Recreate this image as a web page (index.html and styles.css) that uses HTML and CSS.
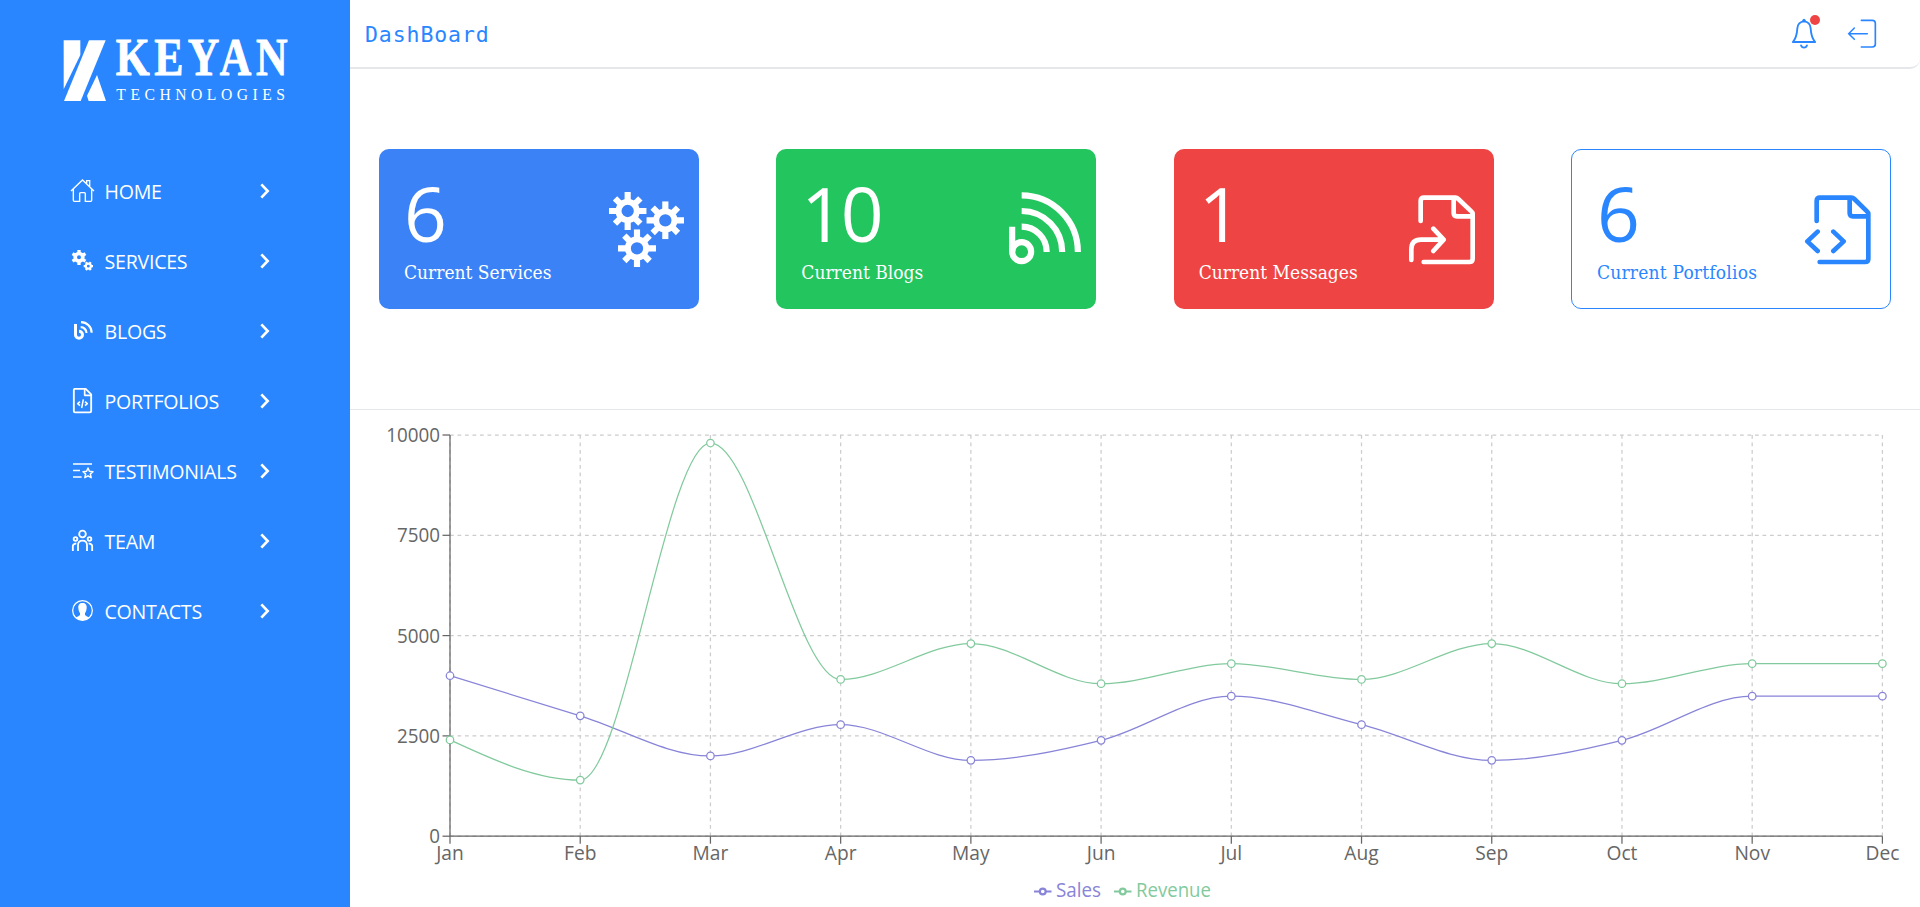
FILE: index.html
```html
<!DOCTYPE html>
<html lang="en">
<head>
<meta charset="utf-8">
<title>DashBoard</title>
<link rel="stylesheet" href="styles.css">
</head>
<body>
<svg class="defs" width="0" height="0">
  <symbol id="chevron" viewBox="0 0 30 48"><path d="M4 4l19 20L4 44" fill="none" stroke="#fff" stroke-width="8"/></symbol>
  <symbol id="gear" viewBox="-57 -57 114 114">
    <circle r="27.5" fill="none" stroke="#fff" stroke-width="18"/>
    <path d="M0-57V-30M0 30V57M-57 0H-30M30 0H57M-38-38L-22-22M22 22L38 38M38-38L22-22M-22 22L-38 38" stroke="#fff" stroke-width="18.5"/>
  </symbol>
</svg>
<div class="app">
  <aside class="sidebar">
    <svg class="logo" viewBox="60 50 720 200" width="240" height="66.7">
      <g fill="#fff">
        <path d="M71 60H121V104L71 207Z"/>
        <path d="M147 60H197L122 242H72Z"/>
        <path d="M171 164L198 242H146L141 226Z"/>
        <text class="logo-name" transform="translate(227 165) scale(.83 1)" textLength="621">KEYAN</text>
        <text class="logo-sub" x="229" y="238" textLength="506">TECHNOLOGIES</text>
      </g>
    </svg>
    <nav class="menu">
      <a class="item">
        <svg class="icon" viewBox="57 54 78 78"><path d="M63 93L97.500 60L132 93M70 88V121Q70 124 73 124H89V101Q89 98 92 98H103Q106 98 106 101V124H122Q125 124 125 121V88M110 70V62H119V79" fill="none" stroke="#fff" stroke-width="4.200"/></svg>
        <span class="label">HOME</span><svg class="chev"><use href="#chevron"/></svg>
      </a>
      <a class="item">
        <svg class="icon" viewBox="57 264 78 78"><g fill="none" stroke="#fff"><circle cx="87" cy="292" r="11.500" stroke-width="11"/><path d="M87 270V280M87 304V315M67.500 281L77 286.500M97 298L106.500 303.500M67.500 303.500L77 298M97 286.500L106.500 281" stroke-width="10"/><circle cx="115" cy="318.500" r="7.500" stroke-width="6.500"/><path d="M108 306.500l3 5M122 306.500l-3 5M108 330.500l3-5M122 330.500l-3-5M101 318.500h6M129 318.500h-6" stroke-width="6.500"/></g></svg>
        <span class="label">SERVICES</span><svg class="chev"><use href="#chevron"/></svg>
      </a>
      <a class="item">
        <svg class="icon" viewBox="57 474 78 78"><g fill="none" stroke="#fff"><path d="M76.500 492V524A10.500 10.500 0 1 0 87 513.500" stroke-width="9"/><path d="M92 501.500A17.500 17.500 0 0 1 109.500 519" stroke-width="6.500"/><path d="M93 486.500A32 32 0 0 1 125 518.500" stroke-width="6.500"/></g></svg>
        <span class="label">BLOGS</span><svg class="chev"><use href="#chevron"/></svg>
      </a>
      <a class="item">
        <svg class="icon" viewBox="57 54 78 78"><g fill="none" stroke="#fff" stroke-linejoin="round"><path d="M75 56.500H107L123.500 73V123Q123.500 127 119.500 127H75Q71.500 127 71.500 123V60Q71.500 56.500 75 56.500Z" stroke-width="5.500"/><path d="M104 57V76H123" stroke-width="5"/><path d="M90 95L83 101L90 107M105 95L112 101L105 107M100 88L95 114" stroke-width="4.500"/></g></svg>
        <span class="label">PORTFOLIOS</span><svg class="chev"><use href="#chevron"/></svg>
      </a>
      <a class="item">
        <svg class="icon" viewBox="57 264 78 78"><g fill="none" stroke="#fff" stroke-width="4.500"><path d="M69 282H126M69 301.500H90M69 321H95"/><path d="M114 294L118.200 304L129 305L121 312L123.500 323L114 317.500L104.500 323L107 312L99 305L109.800 304Z" stroke-linejoin="round"/></g></svg>
        <span class="label">TESTIMONIALS</span><svg class="chev"><use href="#chevron"/></svg>
      </a>
      <a class="item">
        <svg class="icon" viewBox="57 474 78 78"><g fill="none" stroke="#fff" stroke-width="5.500"><circle cx="97.500" cy="492" r="10"/><circle cx="76.500" cy="507" r="5.500"/><circle cx="118.500" cy="507" r="5.500"/><path d="M84 543V526Q84 512 97.500 512Q111 512 111 526V543M68.500 543V529Q68.500 521 79 520M126.500 543V529Q126.500 521 116 520"/></g></svg>
        <span class="label">TEAM</span><svg class="chev"><use href="#chevron"/></svg>
      </a>
      <a class="item">
        <svg class="icon" viewBox="57 684 78 78"><circle cx="97.500" cy="721.500" r="29.500" fill="none" stroke="#fff" stroke-width="3.800"/><path d="M97.500 699C107 699 111 705 110 715Q109 726 105 730V735Q110 740 118 742Q108 751 97.500 751Q87 751 77 742Q85 740 90 735V730Q86 726 85 715C84 705 88 699 97.500 699Z" fill="#fff"/></svg>
        <span class="label">CONTACTS</span><svg class="chev"><use href="#chevron"/></svg>
      </a>
    </nav>
  </aside>

  <main class="main">
    <header class="topbar">
      <h1 class="title">DashBoard</h1>
      <div class="actions">
        <span class="bell">
          <svg viewBox="147 51 90 96" width="30" height="32"><g fill="none" stroke="#2986ff" stroke-width="5.500" stroke-linecap="round" stroke-linejoin="round"><path d="M192 61C178 62 173 71 172 82C171 102 168 112 158.500 123H225.500C216 112 213 102 212 82C211 71 206 62 192 61ZM189 59L192 56L195 59"/><path d="M183 133Q185 140 192 140Q199 140 201 133"/></g></svg>
          <i class="dot"></i>
        </span>
        <svg viewBox="321 51 90 96" width="30" height="32"><g fill="none" stroke="#2986ff" stroke-width="5" stroke-linecap="round"><path d="M364 58H397Q406 58 406 67V129Q406 138 397 138H364"/><path d="M382 98H326M343 81L326 98L343 115" stroke-width="4.500"/></g></svg>
      </div>
    </header>

    <section class="cards">
      <article class="card blue">
        <div class="info"><strong class="count">6</strong><span class="caption">Current Services</span></div>
        <svg class="pict" viewBox="747 185 225 225"><use href="#gear" x="746" y="185" width="114" height="114"/><use href="#gear" x="859" y="213" width="114" height="114"/><use href="#gear" x="774" y="297" width="114" height="114"/></svg>
      </article>
      <article class="card green">
        <div class="info"><strong class="count">10</strong><span class="caption">Current Blogs</span></div>
        <svg class="pict" viewBox="738 185 225 225"><g fill="none" stroke="#fff" stroke-width="18.500"><circle cx="785" cy="364" r="28.500"/><path d="M756.500 289V364M785 289A75 75 0 0 1 860 365M785 242A122 122 0 0 1 906.500 365M785 195A169 169 0 0 1 953.500 365"/></g></svg>
      </article>
      <article class="card red">
        <div class="info"><strong class="count">1</strong><span class="caption">Current Messages</span></div>
        <svg class="pict" viewBox="732 185 225 225"><g fill="none" stroke="#fff" stroke-width="14" stroke-linecap="round" stroke-linejoin="round"><path d="M782 272V212Q782 202 792 202H886Q891 202 895 206L934 243Q938 246 938 252V385Q938 395 928 395H791M881 203V248Q881 258 891 258H936M754 389V357Q754 328 783 328H850M820 295L851 328L820 362"/></g></svg>
      </article>
      <article class="card outline">
        <div class="info"><strong class="count">6</strong><span class="caption">Current Portfolios</span></div>
        <svg class="pict" viewBox="720 185 225 225"><g fill="none" stroke="#2986ff" stroke-width="14" stroke-linecap="round" stroke-linejoin="round"><path d="M770 272V212Q770 202 780 202H874Q879 202 883 206L921 243Q925 246 925 252V385Q925 395 915 395H779M869 203V248Q869 258 879 258H924M773 304L742 333L773 362M820 304L851 333L820 362"/></g></svg>
      </article>
    </section>

    <section class="chart">
      <svg id="plot" width="1570" height="497" viewBox="350 410 1570 497"></svg>
    </section>
  </main>
</div>
<script src="chart.js"></script>
</body>
</html>
```

FILE: styles.css
```css
* { box-sizing: border-box; }
body { margin: 0; font-family: "Open Sans", "Noto Sans", sans-serif; font-size: 20px; background: #fff; overflow: hidden; }
.defs { position: absolute; }
.app { display: flex; width: 1920px; height: 907px; }

.sidebar { width: 350px; background: #2986ff; color: #fff; padding-top: 36.7px; flex: none; }
.logo { display: block; margin-left: 60px; overflow: visible; }
.logo-name { font: bold 158px "Liberation Serif", serif; stroke: #fff; stroke-width: 2.5px; }
.logo-sub { font: 47px "Liberation Serif", serif; }
.menu { margin-top: 52.6px; }
.item { display: flex; align-items: center; height: 70px; padding: 0 80px 0 69px; }
.icon { width: 26px; height: 26px; flex: none; }
.label { flex: 1; margin-left: 9.5px; font-size: 19.6px; letter-spacing: -0.25px; line-height: 30px; padding-top: 3px; white-space: nowrap; }
.chev { width: 10px; height: 16px; flex: none; }

.main { flex: 1; display: flex; flex-direction: column; }
.topbar { display: flex; align-items: center; justify-content: space-between; height: 69px; padding: 0 43px 0 15px; border-bottom: 2px solid #e5e7eb; border-bottom-right-radius: 10px; }
.title { margin: 0; padding-top: 2px; font: 21.5px "DejaVu Sans Mono", monospace; letter-spacing: 0.9px; color: #2986ff; }
.actions { display: flex; gap: 28px; }
.actions svg { display: block; }
.bell { position: relative; }
.dot { position: absolute; top: -3px; left: 21px; width: 10px; height: 10px; border-radius: 50%; background: #ef4444; }

.cards { display: flex; justify-content: space-between; padding: 80px 29px 100px; height: 341px; border-bottom: 1px solid #e5e7eb; }
.card { display: flex; align-items: center; justify-content: space-between; width: 320px; height: 160px; padding: 0 15px 0 25px; border-radius: 10px; color: #fff; }
.blue { background: #3b82f6; }
.green { background: #22c55e; }
.red { background: #ef4444; }
.outline { border: 1px solid #2986ff; color: #2986ff; }
.info { display: flex; flex-direction: column; padding-top: 4px; }
.count { font-size: 75px; font-weight: 400; line-height: 75px; letter-spacing: -3.5px; }
.caption { font-family: "DejaVu Serif Condensed", "DejaVu Serif", serif; font-size: 19px; font-stretch: condensed; line-height: 30px; margin-top: 6px; white-space: nowrap; }
.outline .caption { letter-spacing: 0.2px; }
.pict { width: 75px; height: 75px; flex: none; }

.chart { flex: 1; }
.chart svg { display: block; }
.grid { stroke: #ccc; stroke-width: 1.25; stroke-dasharray: 3.75 3.75; }
.axis { stroke: #666; stroke-width: 1.25; }
.tick { fill: #666; font-size: 19.2px; }
.series { fill: none; stroke-width: 1.25; }
.point { fill: #fff; stroke-width: 1.25; }
.legend { font-size: 19.2px; }
```

FILE: chart.js
```js
const months = ["Jan", "Feb", "Mar", "Apr", "May", "Jun", "Jul", "Aug", "Sep", "Oct", "Nov", "Dec"];
const series = [
  { name: "Sales", color: "#8884d8", data: [4000, 3000, 2000, 2780, 1890, 2390, 3490, 2780, 1890, 2390, 3490, 3490], icon: 1034, width: 45 },
  { name: "Revenue", color: "#82ca9d", data: [2400, 1398, 9800, 3908, 4800, 3800, 4300, 3908, 4800, 3800, 4300, 4300], icon: 1114, width: 75 }
];
const left = 450, right = 1882.4, top0 = 435, bottom = 836.2;
const step = (right - left) / 11;
const X = i => left + i * step;
const Y = v => bottom - (v / 10000) * (bottom - top0);

// Monotone cubic interpolation through evenly spaced points
function curve(data) {
  const y = data.map(Y), n = y.length;
  const s = y.slice(1).map((v, i) => (v - y[i]) / step);
  const t = y.map((_, i) => {
    if (i === 0 || i === n - 1) return 0;
    const a = s[i - 1], b = s[i];
    return (Math.sign(a) + Math.sign(b)) * Math.min(Math.abs(a), Math.abs(b), Math.abs(a + b) / 4);
  });
  t[0] = (3 * s[0] - t[1]) / 2;
  t[n - 1] = (3 * s[n - 2] - t[n - 2]) / 2;
  let d = `M${X(0)} ${y[0]}`;
  for (let i = 1; i < n; i++) {
    const k = step / 3;
    d += `C${X(i - 1) + k} ${y[i - 1] + k * t[i - 1]} ${X(i) - k} ${y[i] - k * t[i]} ${X(i)} ${y[i]}`;
  }
  return d;
}

let out = "";
const levels = [0, 2500, 5000, 7500, 10000];
levels.forEach(v => { out += `<line class="grid" x1="${left}" x2="${right}" y1="${Y(v)}" y2="${Y(v)}"/>`; });
months.forEach((m, i) => { out += `<line class="grid" x1="${X(i)}" x2="${X(i)}" y1="${top0}" y2="${bottom}"/>`; });
out += `<path class="axis" fill="none" d="M${left} ${top0}V${bottom}H${right}"/>`;
levels.forEach(v => {
  const w = String(v).length * 10.75;
  out += `<line class="axis" x1="442.500" x2="${left}" y1="${Y(v)}" y2="${Y(v)}"/>`;
  out += `<text class="tick" text-anchor="end" x="440" y="${Y(v) + 7}" textLength="${w}" lengthAdjust="spacingAndGlyphs">${v}</text>`;
});
months.forEach((m, i) => {
  out += `<line class="axis" x1="${X(i)}" x2="${X(i)}" y1="${bottom}" y2="${bottom + 7.5}"/>`;
  out += `<text class="tick" text-anchor="middle" x="${X(i)}" y="860">${m}</text>`;
});
series.forEach(s => {
  out += `<path class="series" stroke="${s.color}" d="${curve(s.data)}"/>`;
  s.data.forEach((v, i) => { out += `<circle class="point" stroke="${s.color}" cx="${X(i)}" cy="${Y(v)}" r="3.75"/>`; });
  out += `<g stroke="${s.color}" fill="none" stroke-width="2.2"><path d="M${s.icon} 891.500h5.800m5.900 0h5.800"/><circle cx="${s.icon + 8.75}" cy="891.500" r="2.900"/></g>`;
  out += `<text class="legend" fill="${s.color}" x="${s.icon + 22}" y="897" textLength="${s.width}" lengthAdjust="spacingAndGlyphs">${s.name}</text>`;
});
document.getElementById("plot").innerHTML = out;
```
